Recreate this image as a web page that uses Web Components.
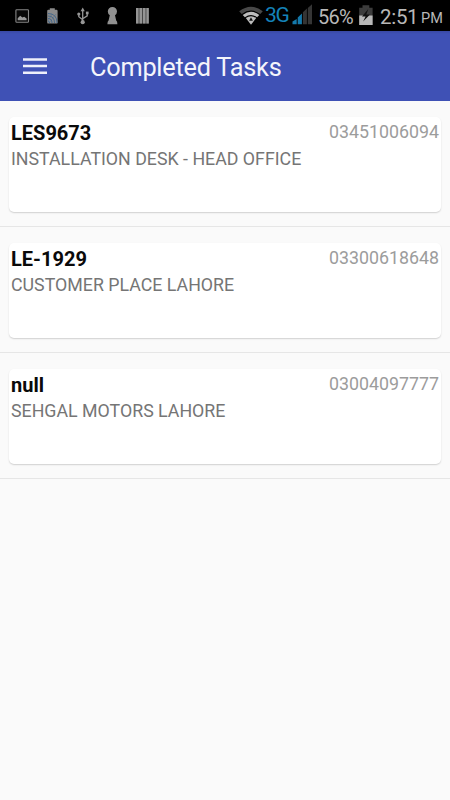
<!DOCTYPE html>
<html lang="en">
<head>
<meta charset="utf-8">
<title>Completed Tasks</title>
<style>
html, body {
  margin: 0;
  height: 100%;
  background: #fafafa;
  font-family: Roboto, "Liberation Sans", sans-serif;
}
</style>
</head>
<body>
<tasks-screen></tasks-screen>
<script>
function define(name, html, setup) {
	const template = document.createElement('template');
	template.innerHTML = html;
	customElements.define(name, class extends HTMLElement {
		constructor() {
			super();
			this.attachShadow({mode: 'open'});
			this.shadowRoot.append(template.content.cloneNode(true));
			if (setup) setup(this.shadowRoot);
		}
	});
}

/* Android status bar: notifications on the left, system state on the right */
define('status-bar', `
<style>
:host {
  display: flex;
  justify-content: space-between;
  height: 31px;
  background: #000;
  color: #b8b8b8;
  line-height: 34px;
  white-space: nowrap;
}
.side {
  display: flex;
}
svg {
  display: block;
  flex: none;
}
.net {
  width: 27px;
  font-size: 21px;
  letter-spacing: -1.4px;
  color: #1482b8;
  line-height: 31px;
}
.level {
  width: 40px;
  margin-left: 4px;
  font-size: 20px;
  letter-spacing: -0.7px;
}
.time {
  width: 41px;
  margin-left: 6px;
  font-size: 20.5px;
  letter-spacing: -0.3px;
}
.half {
  width: 29px;
  font-size: 14.5px;
  line-height: 37px;
}
</style>
<div class="side">
  <svg width="160" height="31" viewBox="0 0 160 31">
    <rect x="15.9" y="9.7" width="12.6" height="12.6" rx=".8" fill="#080808" stroke="#858585" stroke-width="1.1"/>
    <path d="M17.7 20.3v-2l2.5-2.6 2.2 1.7 1.8-.6 2.4 1.6v1.9z" fill="#999"/>
    <path d="M47.2 11q0-1.2 1.2-1.2h1.4V8.2h5v1.6h1.6q1.2 0 1.2 1.2v11.4q0 1.2-1.2 1.2h-8q-1.2 0-1.2-1.2z" fill="#8b8b8b"/>
    <g fill="none" stroke="#46688a" stroke-width="1">
      <path d="M48 13.5q9 0 9 9.5M48 16q6.5 0 6.5 7M48 18.5q4 0 4 4.5M48 21q1.5 0 1.5 2"/>
      <path d="M49 23l7-9M48 21l4-7" stroke-width=".4"/>
    </g>
    <path d="M82.7 10v12M78.8 14.5v2.3l3.9 3M87.2 13.5v2.3l-4.5 3" fill="none" stroke="#969696" stroke-width="1.3"/>
    <path d="M80.6 11.2l2.1-3.6 2.1 3.6z" fill="#969696"/>
    <circle cx="82.7" cy="22.2" r="2.1" fill="#969696"/>
    <circle cx="78.8" cy="14" r="1.6" fill="#969696"/>
    <rect x="85.9" y="11.6" width="2.7" height="2.7" fill="#969696"/>
    <path d="M109.8 15.3q-2-1.5-2-3.8a4.6 4.6 0 0 1 9.2 0q0 2.3-2 3.8l1.2 5.2q1.2.8 1.2 3.7h-10q0-2.9 1.2-3.7z" fill="#919191"/>
    <rect x="136" y="8" width="12.8" height="15.6" fill="#484848"/>
    <path d="M136 8h2.5v15.6h-2.5zM139.5 8h2.5v15.6h-2.5zM143 8h2.5v15.6h-2.5zM146.4 8h2.4v15.6h-2.4z" fill="#959595"/>
  </svg>
</div>
<div class="side">
  <svg width="26" height="31" viewBox="239 0 26 31">
    <path d="M239.2 11.3Q251 2.3 262.8 11.3L260.3 14Q251 7.2 241.7 14z" fill="#484848"/>
    <path d="M242.7 14.9Q251 8.6 259.3 14.9L257.1 17.3Q251 12.8 244.9 17.3z" fill="#bdbdbd"/>
    <path d="M245.8 18.1Q251 14.2 256.2 18.1L251 24.7z" fill="#bdbdbd"/>
    <path d="M251 17.2l1.9 3.5h-3.8z" fill="#111"/>
  </svg>
  <span class="net">3G</span>
  <svg width="22" height="31" viewBox="292 0 22 31">
    <path d="M292.5 24.3v-2.7l4.2-2.7v5.4zM297.7 24.3v-6.9l4.2-4v10.9z" fill="#1479ab"/>
    <path d="M302.9 24.3v-12l4-3.7v15.7zM307.8 24.3V7.9l4.2-3.7v20.1z" fill="#353535"/>
  </svg>
  <span class="level">56%</span>
  <svg width="16" height="31" viewBox="358 0 16 31">
    <path d="M359.2 7.8h3.3V5.3h6.8v2.5h3.3V25h-13.4z" fill="#3c3c3c"/>
    <path d="M359.2 15.5h13.4V25h-13.4z" fill="#b8b8b8"/>
    <path d="M368.3 9l-6.3 7.4h3.6l-2.5 5.2 6.9-7.2h-3.7z" fill="#101010"/>
  </svg>
  <span class="time">2:51</span>
  <span class="half">PM</span>
</div>
`);

define('app-bar', `
<style>
:host {
  display: flex;
  align-items: center;
  box-sizing: border-box;
  height: 70.3px;
  padding-left: 23px;
  background: linear-gradient(#3949a3, #3f51b5 3px);
  color: #f4f5fb;
}
svg {
  display: block;
}
h1 {
  margin: 3px 0 0 43px;
  font-size: 25.3px;
  font-weight: 400;
  letter-spacing: -0.23px;
  line-height: 30px;
  white-space: nowrap;
}
</style>
<svg width="24" height="18" viewBox="0 0 24 18">
  <path d="M0 2.5h24M0 9h24M0 15.7h24" stroke="#eef0fa" stroke-width="2.4"/>
</svg>
<h1><slot></slot></h1>
`);

/* One list row: a card and the divider under it */
define('task-card', `
<style>
:host {
  display: block;
  box-sizing: border-box;
  height: 125.7px;
  padding: 15.5px 9px 0;
  border-bottom: 1px solid #e6e6e6;
}
.card {
  box-sizing: border-box;
  height: 95px;
  padding: 4px 2px 0;
  border-radius: 5px;
  background: #fff;
  box-shadow: 0 1px 1.5px rgba(0, 0, 0, .17);
}
.head {
  display: flex;
  justify-content: space-between;
  height: 26px;
  line-height: 24px;
}
.plate {
  font-size: 20px;
  font-weight: 700;
  color: #0a0a0a;
}
.phone {
  font-size: 17.8px;
  line-height: 22px;
  color: #9c9c9c;
}
.place {
  font-size: 17.8px;
  line-height: 24px;
  color: #757575;
  white-space: nowrap;
}
</style>
<div class="card">
  <div class="head">
    <span class="plate"><slot name="plate"></slot></span>
    <span class="phone"><slot name="phone"></slot></span>
  </div>
  <div class="place"><slot></slot></div>
</div>
`);

define('tasks-screen', `
<style>
:host {
  display: flex;
  flex-direction: column;
  height: 100vh;
  overflow: hidden;
}
status-bar, app-bar, task-card {
  flex: none;
}
main {
  padding-top: .5px;
}
</style>
<status-bar></status-bar>
<app-bar>Completed Tasks</app-bar>
<main></main>
`, root => {
	const tasks = [
		['LES9673', '03451006094', 'INSTALLATION DESK - HEAD OFFICE'],
		['LE-1929', '03300618648', 'CUSTOMER PLACE LAHORE'],
		['null', '03004097777', 'SEHGAL MOTORS LAHORE']
	];
	root.querySelector('main').innerHTML = tasks.map(([plate, phone, place]) => `
		<task-card>
			<span slot="plate">${plate}</span>
			<span slot="phone">${phone}</span>
			${place}
		</task-card>`).join('');
});
</script>
</body>
</html>
